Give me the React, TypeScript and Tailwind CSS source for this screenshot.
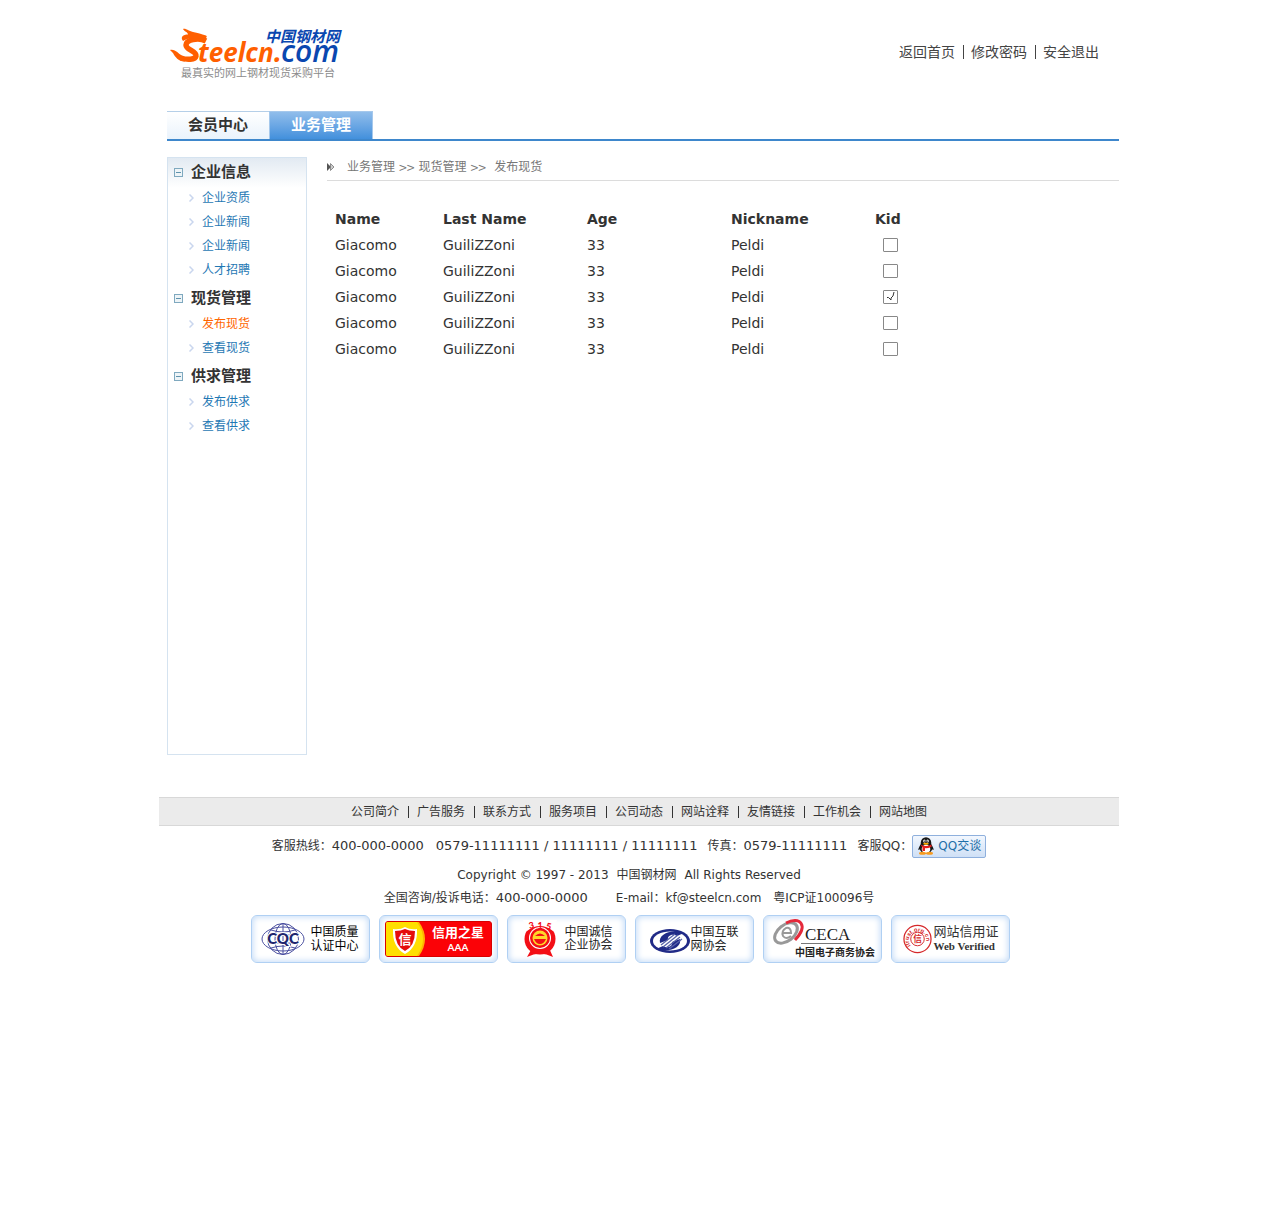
import type { ReactNode } from 'react';

const topLinks = ['返回首页', '修改密码', '安全退出'];

const groups = [
  { title: '企业信息', items: ['企业资质', '企业新闻', '企业新闻', '人才招聘'] },
  { title: '现货管理', items: ['发布现货', '查看现货'] },
  { title: '供求管理', items: ['发布供求', '查看供求'] },
];

const rows = [false, false, true, false, false].map((kid) => ({
  name: 'Giacomo',
  last: 'GuiliZZoni',
  age: '33',
  nick: 'Peldi',
  kid,
}));

const footerLinks = ['公司简介', '广告服务', '联系方式', '服务项目', '公司动态', '网站诠释', '友情链接', '工作机会', '网站地图'];

function Logo() {
  return (
    <svg width="176" height="54" viewBox="0 0 176 54" role="img" aria-label="Steelcn.com 中国钢材网">
      <path d="M36 13C28 9 16 12 16 17C16 22 27 23 26 28C25 32 17 32 11 30" fill="none" stroke="#ff5f00" strokeWidth="5.500" />
      <g fill="#ff5f00">
        <path d="M0 22C6 21 8 26 12 27.500L15 33.500C9 34 5 29 3 25Z" />
        <path d="M13 1C16 0 18 3 23 4C28 5 31 6 36 7.500C38 9 36 11 31 10.500C24 10 18 9.500 13 13C10 9 13 6.500 18 6.500C18 4 14 3.500 13 1Z" />
      </g>
      <g fontFamily='"Open Sans", sans-serif' fontStyle="italic">
        <text x="28" y="34" fontSize="26" fontWeight="700" fill="#ff5f00">teelcn</text>
        <text x="104" y="34" fontSize="28" fontWeight="700" fill="#ff5f00">.</text>
        <text x="111" y="34" fontSize="30" fontWeight="600" fill="#0a47b0">com</text>
      </g>
      <text x="95" y="14" fontSize="15" fontWeight="700" fontStyle="italic" fill="#0a47b0" fontFamily='"Noto Sans CJK SC", sans-serif'>中国钢材网</text>
      <text x="11" y="49" fontSize="11" fill="#8c8c8c" fontFamily='"Noto Sans CJK SC", sans-serif'>最真实的网上钢材现货采购平台</text>
    </svg>
  );
}

function CollapseIcon() {
  return (
    <svg width="9" height="9" viewBox="0 0 9 9" aria-hidden="true">
      <rect x=".5" y=".5" width="8" height="8" fill="#eef4f7" stroke="#7fa9bf" />
      <path d="M2 4.5h5" stroke="#5f93ad" />
    </svg>
  );
}

function ItemArrow() {
  return (
    <svg width="5" height="8" viewBox="0 0 5 8" fill="none" stroke="#c9d6ee" strokeWidth="1.5" aria-hidden="true">
      <path d="M.5 .5L4 4L.5 7.5" />
    </svg>
  );
}

function Penguin() {
  return (
    <svg className="shrink-0" width="16" height="18" viewBox="0 0 16 18" aria-hidden="true">
      <path d="M3 8C0 11 0 13 1 13L3 11ZM13 8C16 11 16 13 15 13L13 11Z" fill="#181818" />
      <ellipse cx="8" cy="10.500" rx="6.500" ry="6" fill="#181818" />
      <ellipse cx="8" cy="5.500" rx="5.200" ry="5.300" fill="#181818" />
      <ellipse cx="8" cy="12" rx="4.300" ry="4.300" fill="#fff" />
      <ellipse cx="6.400" cy="4" rx="1.200" ry="1.600" fill="#fff" />
      <ellipse cx="9.600" cy="4" rx="1.200" ry="1.600" fill="#fff" />
      <circle cx="6.800" cy="4.200" r=".6" />
      <circle cx="9.200" cy="4.200" r=".6" />
      <ellipse cx="8" cy="6.800" rx="2.800" ry="1" fill="#ffb000" />
      <path d="M2.500 7.500Q8 10.500 13.500 7.500V10Q8 12 7 11V14H4.500V10.500Z" fill="#e5201d" />
      <ellipse cx="4.500" cy="16.300" rx="3.500" ry="1.500" fill="#f79a1e" />
      <ellipse cx="11.500" cy="16.300" rx="3.500" ry="1.500" fill="#f79a1e" />
    </svg>
  );
}

function Badge({ label, children }: { label: string; children: ReactNode }) {
  return (
    <a
      href="#"
      aria-label={label}
      className="flex h-12 w-[119px] items-center rounded-md border border-[#b0d0f3] bg-white text-black shadow-[inset_0_0_6px_1px_#c3dbf7]"
    >
      {children}
    </a>
  );
}

function Badges() {
  return (
    <div className="ml-0.5 flex gap-[9px] pt-2">
      <Badge label="中国质量认证中心">
        <svg className="ml-[9px]" width="44" height="34" viewBox="0 0 44 34" aria-hidden="true">
          <g fill="none" stroke="#4a4fa0" strokeWidth="1">
            <ellipse cx="22" cy="17" rx="21" ry="12" />
            <circle cx="22" cy="17" r="15.500" />
            <ellipse cx="22" cy="17" rx="8" ry="15.500" />
            <path d="M22 1V33M10 8Q22 12 34 8M10 26Q22 22 34 26M7 13H37M7 21H37" />
          </g>
          <text x="22" y="22" textAnchor="middle" fontFamily="Lato, sans-serif" fontSize="15" fontWeight="900" fill="#20256e" stroke="#fff" strokeWidth="2" paintOrder="stroke">CQC</text>
        </svg>
        <span className="ml-1.5 text-xs leading-[14px]">中国质量<br />认证中心</span>
      </Badge>
      <Badge label="信用之星 AAA">
        <span className="mx-[5px] flex h-9 flex-1 overflow-hidden rounded-[3px] border border-[#d80000] bg-[#fb0207] text-white">
          <svg width="40" height="34" viewBox="0 0 40 34" aria-hidden="true">
            <path d="M0 0H33Q45 17 33 34H0Z" fill="#ffb400" />
            <path d="M0 0H31Q43 17 31 34H0Z" fill="#ffdf00" />
            <path d="M7 7Q14 8 19 5Q24 8 31 7Q32 25 19 32Q6 25 7 7Z" fill="#fff" />
            <path d="M9 9Q15 9 19 7Q23 9 29 9Q29 24 19 29Q9 24 9 9Z" fill="#e50c0c" />
            <text x="19" y="22" textAnchor="middle" fontSize="13" fontWeight="700" fill="#fff">信</text>
          </svg>
          <span className="flex flex-1 flex-col items-center justify-center text-[13px] leading-4 font-bold">
            信用之星
            <span className="font-[Lato,sans-serif] text-[10px] leading-3">AAA</span>
          </span>
        </span>
      </Badge>
      <Badge label="中国诚信企业协会">
        <svg className="ml-[15px]" width="34" height="38" viewBox="0 0 34 38" aria-hidden="true">
          <path d="M9 28L4 37Q17 30 30 37L26 28Z" fill="#f30e16" />
          <circle cx="17" cy="19" r="15.500" fill="#f30e16" />
          <circle cx="17" cy="18" r="11" fill="#fff" />
          <circle cx="17" cy="18" r="10" fill="#f30e16" />
          <circle cx="17" cy="18" r="7.500" fill="#ffd62a" />
          <path d="M11 19H23Q21 24 17 24Q13 24 11 19ZM12 16Q17 11 22 16Z" fill="#f30e16" />
          <path d="M4 11L0 0H34L30 11Q17 1 4 11Z" fill="#fff" />
          <text y="9" textAnchor="middle" fontFamily="Lato, sans-serif" fontSize="9" fontWeight="900" fill="#f30e16" x="9 17 25" rotate="-12 0 12">315</text>
        </svg>
        <span className="ml-2 text-xs leading-[13px] text-[#222]">中国诚信<br />企业协会</span>
      </Badge>
      <Badge label="中国互联网协会">
        <svg className="mt-1 ml-[13px]" width="42" height="26" viewBox="0 0 42 26" aria-hidden="true">
          <ellipse cx="21" cy="13" rx="20" ry="12" fill="#202a87" />
          <ellipse cx="21" cy="13" rx="17" ry="9.500" fill="#fff" />
          <path d="M11 15C9 6 22 1 35 5L28 8C23 5 18 8 19 12ZM31 11C33 20 20 25 7 21L14 18C19 21 24 18 23 14Z" fill="#202a87" />
          <path d="M12 17L26 6M14 19L29 7M17 20L31 9M20 21L33 11" stroke="#5963aa" strokeWidth="1.300" />
        </svg>
        <span className="text-xs leading-[14px] text-[#222]">中国互联<br />网协会</span>
      </Badge>
      <Badge label="CECA 中国电子商务协会">
        <svg width="116" height="44" viewBox="0 0 116 44" aria-hidden="true">
          <g fill="none">
            <ellipse cx="22" cy="16" rx="13" ry="8" transform="rotate(-38 22 16)" stroke="#999" strokeWidth="3" />
            <path d="M22 6C36 -1 45 8 31 23" stroke="#e5293a" strokeWidth="3" />
            <path d="M19 16H27Q27 10 22 11Q17 14 19 19Q22 23 27 19" stroke="#999" strokeWidth="2" />
          </g>
          <text x="41" y="23" fontFamily='"Liberation Serif", serif' fontSize="17" fill="#222">CECA</text>
          <path d="M37 26.500H91" stroke="#777" />
          <text x="31" y="39" fontSize="10" fontWeight="700" fill="#222">中国电子商务协会</text>
        </svg>
      </Badge>
      <Badge label="网站信用证 Web Verified">
        <svg className="mr-0.5 ml-[11px] shrink-0" width="29" height="30" viewBox="0 0 30 30" aria-hidden="true">
          <defs>
            <path id="seal-ring" d="M8 22A9 9 0 1 1 22 22" />
          </defs>
          <circle cx="15" cy="15" r="14" fill="none" stroke="#d5282b" strokeWidth="1.300" />
          <circle cx="15" cy="15" r="7" fill="none" stroke="#d5282b" />
          <text fontFamily='"Liberation Sans", sans-serif' fontSize="6" fontWeight="700" fill="#d5282b">
            <textPath href="#seal-ring">itrust.org.cn</textPath>
          </text>
          <text x="15" y="18" textAnchor="middle" fontSize="9" fontWeight="700" fill="#d5282b">信</text>
        </svg>
        <span className="font-[Liberation_Serif,Noto_Sans_CJK_SC,serif] text-[13px] leading-[14px] whitespace-nowrap text-[#333]">
          网站信用证
          <br />
          <span className="text-[11px] leading-[14px] font-bold">Web Verified</span>
        </span>
      </Badge>
    </div>
  );
}

export default function App() {
  return (
    <div className="min-h-screen bg-white font-[DejaVu_Sans,Noto_Sans_CJK_SC,sans-serif] text-[#333]">
      <div className="mx-auto max-w-[960px]">
        <div className="pl-2">
          <header className="flex justify-between pt-7">
            <a href="#" className="ml-[3px] block h-[83px]"><Logo /></a>
            <nav className="flex h-12 items-center gap-2 pr-5 text-sm">
              {topLinks.map((t, i) => (
                <span key={t} className="flex items-center">
                  {i > 0 && <span className="mr-[7px] h-3.5 border-l border-[#444]" aria-hidden="true" />}
                  <a href="#" className="text-[#444]">{t}</a>
                </span>
              ))}
            </nav>
          </header>

          <nav className="flex h-[30px] border-b-2 border-[#3e87cc] text-[15px] font-bold">
            <a href="#" className="flex w-[102px] items-center justify-center border-t border-[#b5cfe8] bg-linear-to-b from-white to-[#eaf3fc]">会员中心</a>
            <a href="#" aria-current="page" className="flex w-[104px] items-center justify-center border border-b-0 border-[#a5c8ec] bg-linear-to-b from-[#90bdeb] to-[#4290dc] text-white">业务管理</a>
          </nav>

          <div className="flex gap-5 pt-4">
            <aside className="flex min-h-[598px] w-[140px] shrink-0 flex-col gap-0.5 border border-[#d5e3f0] bg-[linear-gradient(#e2eaf2,#ffffff_30px)]">
              {groups.map((g) => (
                <section key={g.title}>
                  <h2 className="flex h-7 items-center pl-1.5 text-[15px] font-bold">
                    <button type="button" className="flex items-center gap-2">
                      <CollapseIcon />
                      {g.title}
                    </button>
                  </h2>
                  <ul className="text-xs">
                    {g.items.map((t, i) => (
                      <li key={i} className="flex h-6 items-center gap-2 pl-[21px]">
                        <ItemArrow />
                        <a href="#" className={t === '发布现货' ? 'text-[#ff6600]' : 'text-[#1f78b4]'}>{t}</a>
                      </li>
                    ))}
                  </ul>
                </section>
              ))}
            </aside>

            <main className="min-w-0 flex-1">
              <nav className="flex h-6 items-center border-b border-[#dcdcdc] pb-1 text-xs text-[#777]">
                <svg className="mr-3" width="8" height="8" viewBox="0 0 8 8" aria-hidden="true">
                  <path d="M0 0L4 4L0 8Z" fill="#555" />
                  <path d="M3.500 .5L7 4L3.500 7.500Z" fill="#ccc" stroke="#777" strokeWidth=".8" />
                </svg>
                <a href="#">业务管理</a>
                <span className="mx-1 font-[Noto_Sans_CJK_SC,sans-serif] text-sm leading-4">&gt;&gt;</span>
                <a href="#">现货管理</a>
                <span className="mr-2 ml-1 font-[Noto_Sans_CJK_SC,sans-serif] text-sm leading-4">&gt;&gt;</span>
                <span>发布现货</span>
              </nav>
              <table className="mt-[25px] ml-2 table-fixed text-left text-sm">
                <thead>
                  <tr className="h-[26px]">
                    <th className="w-[108px] p-0">Name</th>
                    <th className="w-36 p-0">Last Name</th>
                    <th className="w-36 p-0">Age</th>
                    <th className="w-36 p-0">Nickname</th>
                    <th className="w-10 p-0">Kid</th>
                  </tr>
                </thead>
                <tbody>
                  {rows.map((r, i) => (
                    <tr key={i} className="h-[26px]">
                      <td className="p-0">{r.name}</td>
                      <td className="p-0">{r.last}</td>
                      <td className="p-0">{r.age}</td>
                      <td className="p-0">{r.nick}</td>
                      <td className="p-0">
                        <label className="relative ml-2 block h-3.5 w-[15px]">
                          <input type="checkbox" defaultChecked={r.kid} aria-label={`Kid, row ${i + 1}`} className="peer block h-3.5 w-[15px] appearance-none rounded-[1px] border border-[#888] bg-white" />
                          <svg className="pointer-events-none absolute top-0.5 left-1 hidden peer-checked:block" width="8" height="9" viewBox="0 0 8 9" fill="none" stroke="#333" aria-hidden="true">
                            <path d="M0 5.500H1.500L4 8V6L6 4L7 0" />
                          </svg>
                        </label>
                      </td>
                    </tr>
                  ))}
                </tbody>
              </table>
            </main>
          </div>
        </div>

        <footer className="mt-[42px] text-xs">
          <nav className="flex h-[29px] items-center justify-center gap-[9px] border-y border-[#d8d8d8] bg-[#ebebeb]">
            {footerLinks.map((t, i) => (
              <span key={t} className="flex items-center">
                {i > 0 && <span className="mr-2 h-3 border-l border-[#333]" aria-hidden="true" />}
                <a href="#">{t}</a>
              </span>
            ))}
          </nav>
          <div className="flex flex-col items-center pr-5 whitespace-nowrap">
            <div className="flex h-10 items-center">
              <span>客服热线：</span>
              <span className="mr-3 text-[13px]">400-000-0000</span>
              <span className="mr-2.5 text-[13px]">0579-11111111 / 11111111 / 11111111</span>
              <span>传真：</span>
              <span className="mr-2.5 text-[13px]">0579-11111111</span>
              <span>客服QQ：</span>
              <button type="button" className="flex h-[23px] w-[74px] items-center gap-1 rounded-xs border border-[#8fb0dd] bg-linear-to-b from-[#f2f7fe] to-[#cfe0f6] pl-[5px] text-[#1f6fa8]">
                <Penguin />
                QQ交谈
              </button>
            </div>
            <p className="flex h-[18px] items-center gap-2">
              <span>Copyright © 1997 - 2013</span>
              <span>中国钢材网</span>
              <span>All Rights Reserved</span>
            </p>
            <p className="mt-1 flex h-[19px] items-center">
              <span>全国咨询/投诉电话：</span>
              <span className="mr-7 text-[13px]">400-000-0000</span>
              <span className="mr-3">E-mail：kf@steelcn.com</span>
              <span>粤ICP证100096号</span>
            </p>
            <Badges />
          </div>
        </footer>
      </div>
    </div>
  );
}
